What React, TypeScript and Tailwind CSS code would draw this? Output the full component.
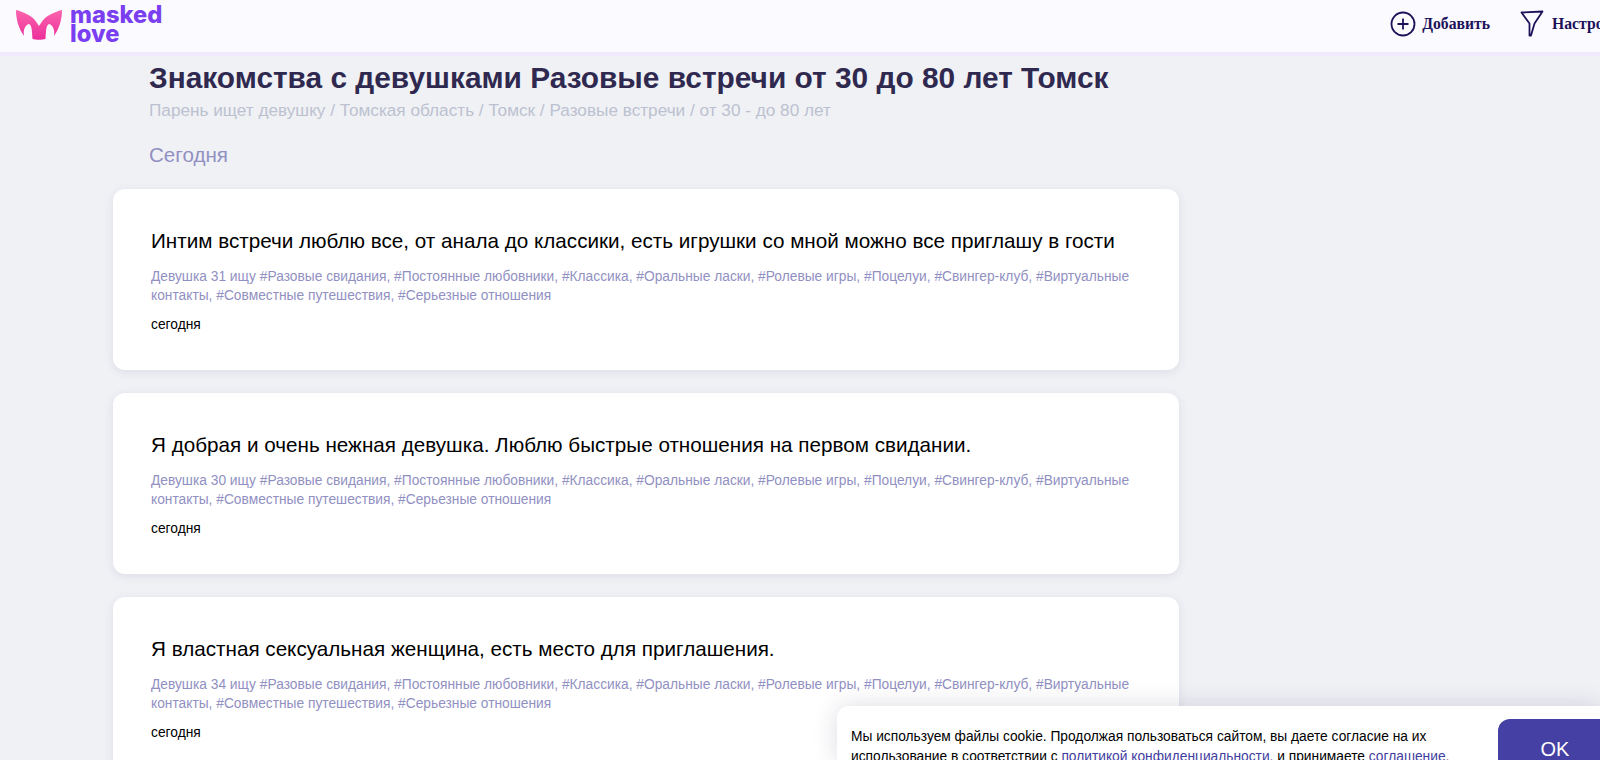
import React from 'react';

const TAGS =
  '#Разовые свидания, #Постоянные любовники, #Классика, #Оральные ласки, #Ролевые игры, #Поцелуи, #Свингер-клуб, #Виртуальные контакты, #Совместные путешествия, #Серьезные отношения';

const CARDS = [
  { title: 'Интим встречи люблю все, от анала до классики, есть игрушки со мной можно все приглашу в гости', age: 31 },
  { title: 'Я добрая и очень нежная девушка. Люблю быстрые отношения на первом свидании.', age: 30 },
  { title: 'Я властная сексуальная женщина, есть место для приглашения.', age: 34 },
];

const Logo = () => (
  <div className="flex items-center gap-[8px]">
    <svg width="46" height="30" viewBox="0 0 46 30" className="mt-[2px]">
      <defs>
        <linearGradient id="logoGrad" x1="0" y1="0" x2="0" y2="1">
          <stop offset="0" stopColor="#fb64ac" />
          <stop offset="1" stopColor="#ec2f9b" />
        </linearGradient>
      </defs>
      <path
        fill="url(#logoGrad)"
        d="M0 0 C8 2 17 6 21 13 L23 16 L25 13 C29 6 38 2 46 0 C46 10 43 19 38 26 C39 20 37 15 33 14 C30 15 30 22 29.5 29 C26 30 20 30 16.5 29 C16 22 16 15 13 14 C9 15 7 20 8 26 C3 19 0 10 0 0 Z"
      />
    </svg>
    <div className="mt-[-1px] font-['Inter',sans-serif] text-[23.7px] font-extrabold leading-[19px] text-[#7a3ff0]">
      <div>masked</div>
      <div>love</div>
    </div>
  </div>
);

const PlusIcon = () => (
  <svg width="26" height="26" viewBox="0 0 26 26" fill="none" stroke="#1d1259" strokeWidth="1.8">
    <circle cx="13" cy="13" r="11.5" />
    <path d="M13 7.5V18.5M7.5 13H18.5" />
  </svg>
);

const FilterIcon = () => (
  <svg width="24" height="28" viewBox="0 0 24 28" fill="none" stroke="#1d1259" strokeWidth="1.8" strokeLinejoin="round">
    <path d="M1.5 2.5 L22.5 1.5 L14.5 13.5 L11 25.5 L9.5 25.5 L9.5 13.5 Z" />
  </svg>
);

const Header = () => (
  <header className="flex h-[56px] shrink-0 items-center justify-between overflow-hidden border-b-[4px] border-[#f1e9fe] bg-[#fbfaff] pb-[4px] pl-[16px]">
    <Logo />
    <div className="flex items-center font-['Liberation_Serif',serif] text-[15.7px] font-bold text-[#1d1259]">
      <div className="flex items-center gap-[6px]">
        <PlusIcon />
        <span>Добавить</span>
      </div>
      <div className="ml-[30px] flex items-center gap-[8px]">
        <FilterIcon />
        <span className="w-[48px] overflow-hidden whitespace-nowrap">Настройки</span>
      </div>
    </div>
  </header>
);

const Card = ({ title, age }: { title: string; age: number }) => (
  <div className="h-[181px] w-[1066px] shrink-0 rounded-[12px] bg-white px-[38px] pt-[38px] shadow-[0_2px_10px_rgba(60,60,110,0.1)]">
    <h2 className="text-[20.66px] leading-[28px] text-black">{title}</h2>
    <p className="mt-[13px] text-[13.78px] leading-[18.5px] text-[#9190c2]">
      Девушка {age} ищу {TAGS}
    </p>
    <p className="mt-[11px] text-[13.8px] leading-[18px] text-black">сегодня</p>
  </div>
);

const CookieBar = () => (
  <div className="absolute bottom-0 right-0 h-[54px] w-[763px] overflow-hidden rounded-tl-[12px] bg-white pl-[14px] pt-[21px] shadow-[0_0_24px_rgba(40,40,80,0.16)]">
    <p className="w-[640px] text-[13.77px] leading-[19.5px] text-black">
      Мы используем файлы cookie. Продолжая пользоваться сайтом, вы даете согласие на их использование в соответствии с{' '}
      <a className="text-[#3f3da0]">политикой конфиденциальности.</a> и принимаете{' '}
      <a className="text-[#3f3da0]">соглашение.</a>
    </p>
    <button className="absolute right-0 top-[13px] h-[60px] w-[102px] rounded-tl-[12px] bg-[#4540a3] pl-[12px] text-[20px] text-white">
      OK
    </button>
  </div>
);

export default function App() {
  return (
    <div className="relative flex h-[760px] w-full flex-col overflow-hidden bg-[#f0f1f5] font-['Liberation_Sans',sans-serif]">
      <Header />
      <main className="pl-[113px]">
        <div className="pl-[36px]">
          <h1 className="mt-[4px] text-[29.85px] font-bold leading-[36px] text-[#2f2950]">
            Знакомства с девушками Разовые встречи от 30 до 80 лет Томск
          </h1>
          <p className="mt-[2px] text-[17.2px] leading-[24px] text-[#bcc1d0]">
            Парень ищет девушку / Томская область / Томск / Разовые встречи / от 30 - до 80 лет
          </p>
          <p className="mt-[20px] text-[20.6px] leading-[26px] text-[#9190c2]">Сегодня</p>
        </div>
        <div className="mt-[21px] flex flex-col gap-[23px]">
          {CARDS.map((card) => (
            <Card key={card.age} title={card.title} age={card.age} />
          ))}
        </div>
      </main>
      <CookieBar />
    </div>
  );
}
